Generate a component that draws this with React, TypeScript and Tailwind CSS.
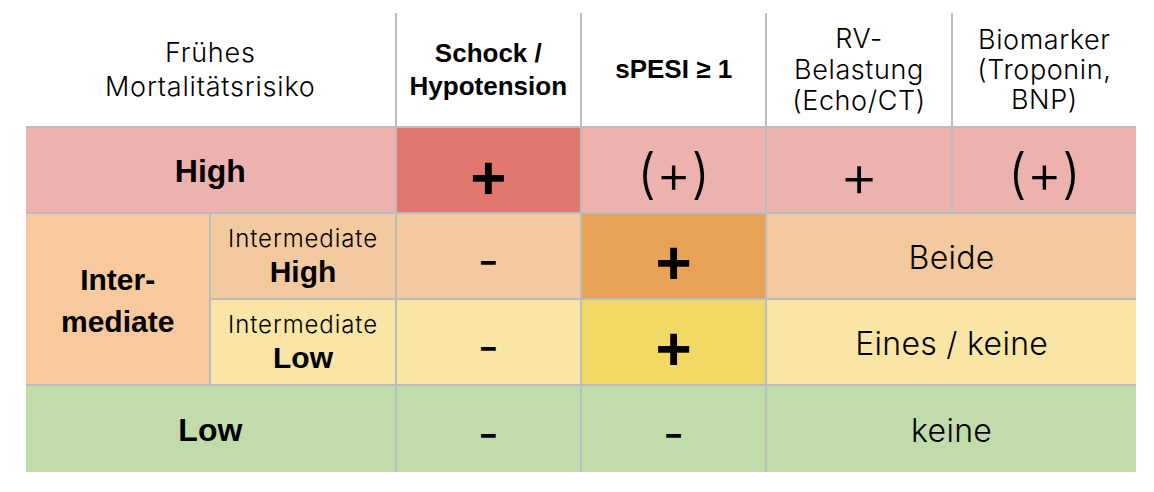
import React from 'react';

const light = "font-['Inter',sans-serif] font-light";
const bold = "font-['Liberation_Sans',Arial,sans-serif] font-bold";
const dash = "font-['Inter',sans-serif] font-normal text-[46px] leading-none pt-[8px]";

function Cell({ className = '', children }: { className?: string; children?: React.ReactNode }) {
  return (
    <div className={`flex flex-col items-center justify-center text-center text-black ${className}`}>
      {children}
    </div>
  );
}

export default function App() {
  return (
    <div className="w-[1154px] h-[492px] bg-white pt-[13px] pl-[26px]">
      <div className="grid w-[1110px] grid-cols-6 grid-rows-[113px_84px_84px_84px_86px] gap-[2px] bg-[#bcbcbc]">
        {/* header */}
        <Cell className={`col-span-2 bg-white text-[27px] leading-[34px] tracking-[0.8px] ${light}`}>
          <span>Frühes</span>
          <span>Mortalitätsrisiko</span>
        </Cell>
        <Cell className={`bg-white text-[26px] leading-[33px] ${bold}`}>
          <span>Schock /</span>
          <span>Hypotension</span>
        </Cell>
        <Cell className={`bg-white text-[26px] ${bold}`}>sPESI ≥ 1</Cell>
        <Cell className={`bg-white text-[27px] leading-[31px] tracking-[0.6px] ${light}`}>
          <span>RV-</span>
          <span>Belastung</span>
          <span>(Echo/CT)</span>
        </Cell>
        <Cell className={`bg-white text-[27px] leading-[30px] tracking-[0.6px] ${light}`}>
          <span>Biomarker</span>
          <span>(Troponin,</span>
          <span>BNP)</span>
        </Cell>

        {/* high */}
        <Cell className={`col-span-2 bg-[#edb1ae] text-[32px] pt-[2px] ${bold}`}>High</Cell>
        <Cell className={`bg-[#e07870] text-[62px] leading-none pt-[16px] ${bold}`}>+</Cell>
        <Cell className={`bg-[#edb1ae] text-[54px] leading-none pt-[8px] ${light}`}>(+)</Cell>
        <Cell className={`bg-[#edb1ae] text-[60px] leading-none pt-[10px] ${light}`}>+</Cell>
        <Cell className={`bg-[#edb1ae] text-[54px] leading-none pt-[8px] ${light}`}>(+)</Cell>

        {/* intermediate */}
        <Cell className={`row-span-2 bg-[#f7c99c] text-[30px] leading-[42px] pt-[4px] ${bold}`}>
          <span>Inter-</span>
          <span>mediate</span>
        </Cell>
        <Cell className="bg-[#f3c9a0] pt-[4px]">
          <span className={`text-[24px] leading-[28px] tracking-[0.9px] ${light}`}>Intermediate</span>
          <span className={`text-[30px] leading-[38px] ${bold}`}>High</span>
        </Cell>
        <Cell className={`bg-[#f3c9a0] ${dash}`}>-</Cell>
        <Cell className={`bg-[#e8a255] text-[62px] leading-none pt-[14px] ${bold}`}>+</Cell>
        <Cell className={`col-span-2 bg-[#f3c9a0] text-[32px] tracking-[0.3px] pt-[4px] ${light}`}>Beide</Cell>

        <Cell className="bg-[#f9e6a7] pt-[4px]">
          <span className={`text-[24px] leading-[28px] tracking-[0.9px] ${light}`}>Intermediate</span>
          <span className={`text-[30px] leading-[38px] ${bold}`}>Low</span>
        </Cell>
        <Cell className={`bg-[#f9e6a7] ${dash}`}>-</Cell>
        <Cell className={`bg-[#f2d865] text-[62px] leading-none pt-[14px] ${bold}`}>+</Cell>
        <Cell className={`col-span-2 bg-[#f9e6a7] text-[32px] tracking-[0.3px] pt-[4px] ${light}`}>Eines / keine</Cell>

        {/* low */}
        <Cell className={`col-span-2 bg-[#c1dcaa] text-[32px] pt-[2px] ${bold}`}>Low</Cell>
        <Cell className={`bg-[#c1dcaa] ${dash}`}>-</Cell>
        <Cell className={`bg-[#c1dcaa] ${dash}`}>-</Cell>
        <Cell className={`col-span-2 bg-[#c1dcaa] text-[32px] tracking-[0.3px] pt-[4px] ${light}`}>keine</Cell>
      </div>
    </div>
  );
}
